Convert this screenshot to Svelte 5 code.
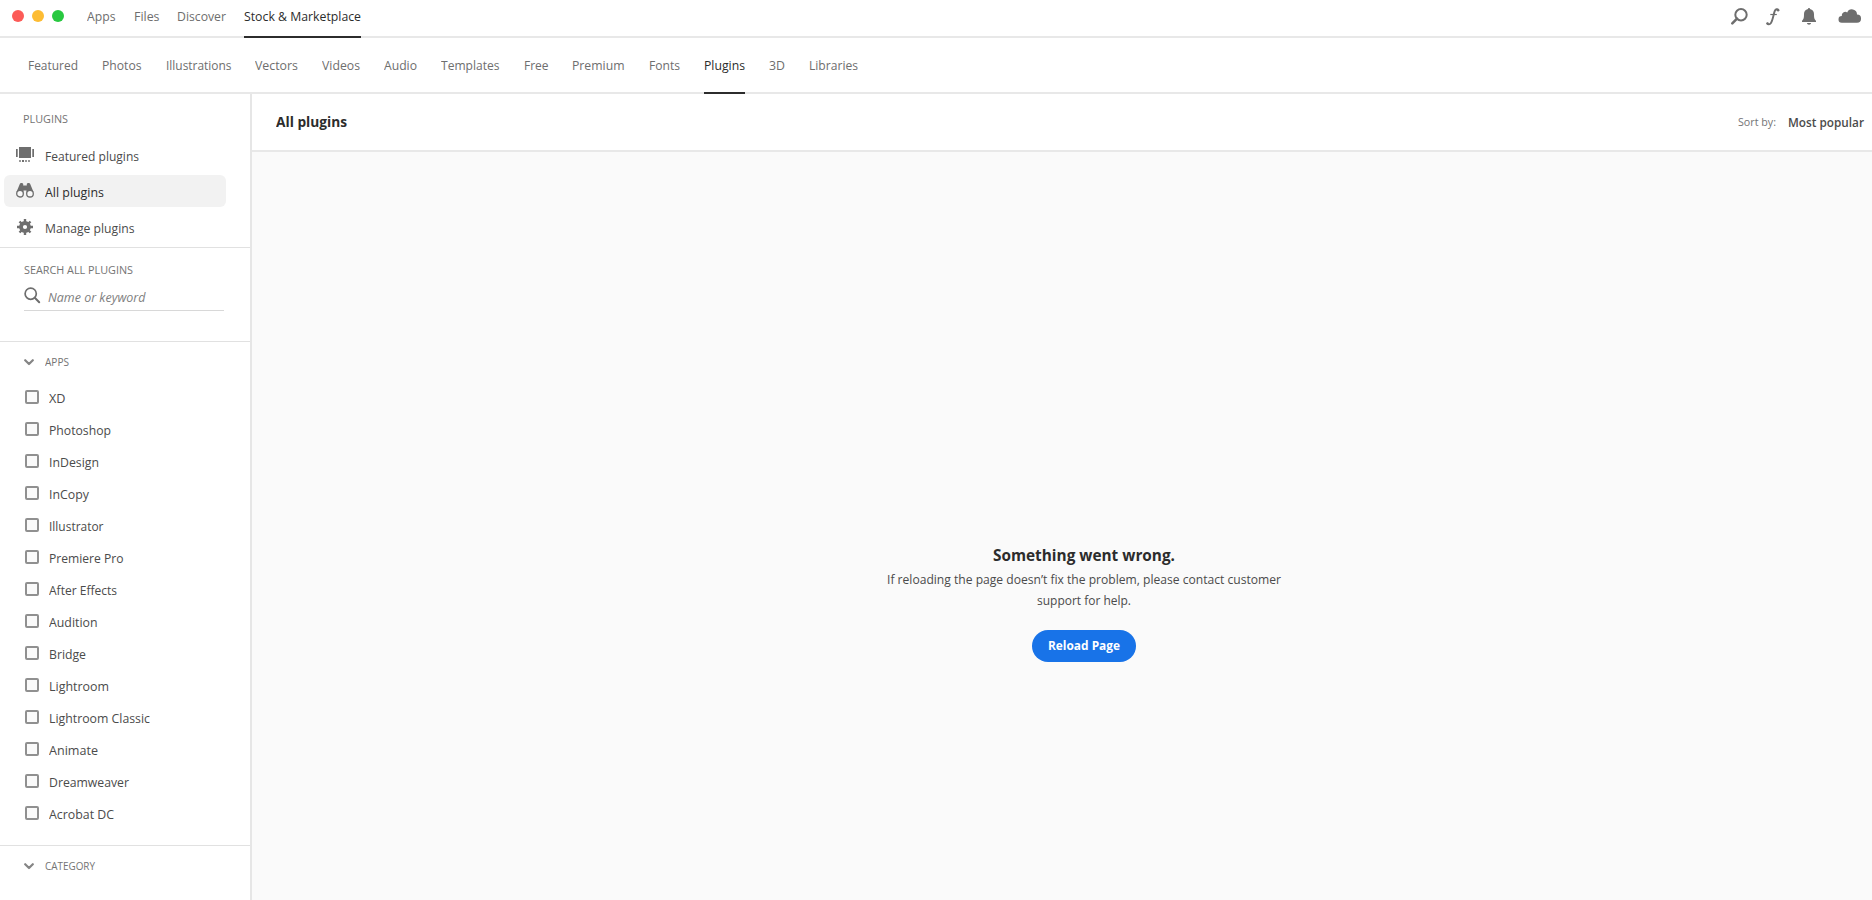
<script>
  const topNav = [
    { label: 'Apps', width: 28.5 },
    { label: 'Files', width: 25.5 },
    { label: 'Discover', width: 49 },
    { label: 'Stock & Marketplace', width: 117, active: true },
  ];

  const subNav = [
    { label: 'Featured', width: 50 },
    { label: 'Photos', width: 39.5 },
    { label: 'Illustrations', width: 65.5 },
    { label: 'Vectors', width: 43 },
    { label: 'Videos', width: 38 },
    { label: 'Audio', width: 33 },
    { label: 'Templates', width: 58.5 },
    { label: 'Free', width: 24.5 },
    { label: 'Premium', width: 52.5 },
    { label: 'Fonts', width: 31 },
    { label: 'Plugins', width: 41, active: true },
    { label: '3D', width: 16 },
    { label: 'Libraries', width: 49 },
  ];

  const apps = [
    { label: 'XD', width: 16.5 },
    { label: 'Photoshop', width: 62 },
    { label: 'InDesign', width: 50 },
    { label: 'InCopy', width: 40 },
    { label: 'Illustrator', width: 54.5 },
    { label: 'Premiere Pro', width: 74.5 },
    { label: 'After Effects', width: 68 },
    { label: 'Audition', width: 48.5 },
    { label: 'Bridge', width: 37 },
    { label: 'Lightroom', width: 60 },
    { label: 'Lightroom Classic', width: 101 },
    { label: 'Animate', width: 49 },
    { label: 'Dreamweaver', width: 80 },
    { label: 'Acrobat DC', width: 65 },
  ];

  // Condenses a label horizontally so that it fills the width of its column.
  function condense(node, width) {
    const natural = node.getBoundingClientRect().width;
    if (natural) node.style.transform = `scaleX(${width / natural})`;
  }
</script>

{#snippet text(label, width)}
  <span class="fit" style:width="{width}px"><span class="glyphs" use:condense={width}>{label}</span></span>
{/snippet}

{#snippet chevron()}
  <svg class="chevron" width="10" height="7" viewBox="0 0 10 7"><path d="M1.2 1.2 5 5l3.800-3.800" fill="none" stroke="#858585" stroke-width="2.200" stroke-linecap="round" stroke-linejoin="round" /></svg>
{/snippet}

<div class="window">
  <header class="topbar">
    <div class="lights"><i class="red"></i><i class="yellow"></i><i class="green"></i></div>
    <nav class="top-nav">
      {#each topNav as item}
        <a class:active={item.active}>{@render text(item.label, item.width)}</a>
      {/each}
    </nav>
    <div class="tools">
      <svg width="18" height="18" viewBox="0 0 18 18"><circle cx="11" cy="6.700" r="5.700" fill="none" stroke="#6e6e6e" stroke-width="2" /><path d="M7 10.700 2.300 15.400" stroke="#6e6e6e" stroke-width="2.600" stroke-linecap="round" /></svg>
      <svg width="14" height="18" viewBox="0 0 14 18"><path d="M12.300 2C11.600.700 9.600 1 8.700 3.200 7.600 5.800 6.900 12.400 4.800 15.200 3.700 16.700 2 16.800 1.300 15.600" fill="none" stroke="#6e6e6e" stroke-width="1.900" stroke-linecap="round" /><path d="M4.300 6.500H10.800" stroke="#6e6e6e" stroke-width="1.200" /><circle cx="12.100" cy="2.300" r="1.200" fill="#6e6e6e" /><circle cx="1.600" cy="15.400" r="1.200" fill="#6e6e6e" /></svg>
      <svg width="16" height="18" viewBox="0 0 16 18"><path d="M7 1C7-.200 9-.200 9 1c2.700.600 4 2.500 4 5 0 4 .300 5.200 2 6.800V14H1v-1.200C2.700 11.200 3 10 3 6c0-2.500 1.300-4.400 4-5ZM6 15h4c0 2.200-4 2.200-4 0Z" fill="#6e6e6e" /></svg>
      <svg width="24" height="16" viewBox="0 0 24 16"><path d="M3.800 14.700a3.300 3.300 0 0 1 0-6.600A3.600 3.600 0 0 1 9.200 4.400A5.100 5.100 0 0 1 19 6.500A4.100 4.100 0 0 1 18.900 14.700Z" fill="#6e6e6e" /></svg>
    </div>
  </header>

  <nav class="subbar">
    {#each subNav as item}
      <a class:active={item.active}>{@render text(item.label, item.width)}</a>
    {/each}
  </nav>

  <div class="body">
    <aside>
      <section class="plugins">
        <h2>{@render text('PLUGINS', 45)}</h2>
        <ul>
          <li>
            <svg width="18" height="18" viewBox="0 0 18 18"><path d="M3 1h12v11H3ZM0 3h1.700v8H0ZM16.300 3H18v8h-1.700Z" fill="#6e6e6e" /><path d="M3 14h2v2H3ZM9 14h2v2H9ZM12 14h2v2h-2Z" fill="#9a9a9a" /><path d="M6 14h2v2H6Z" fill="#6e6e6e" /></svg>
            {@render text('Featured plugins', 94)}
          </li>
          <li class="selected">
            <svg width="18" height="18" viewBox="0 0 18 18"><path d="M3.800 2C4.300.700 6.700.700 7.200 2V3.500h3.600V2c.5-1.300 2.900-1.300 3.400 0L17.500 10 10.500 12V8.500h-3V12L.500 10Z" fill="#6e6e6e" /><circle cx="4" cy="11.700" r="3.300" fill="#f7f7f7" stroke="#6e6e6e" stroke-width="1.300" /><circle cx="14" cy="11.700" r="3.300" fill="#f7f7f7" stroke="#6e6e6e" stroke-width="1.300" /></svg>
            {@render text('All plugins', 59)}
          </li>
          <li>
            <svg width="18" height="18" viewBox="0 0 18 18"><g transform="translate(9 9)" fill="none" stroke="#6e6e6e"><circle r="4" stroke-width="3.800" /><path d="M0-8v3M0 8V5M-8 0h3M8 0H5M-5.500-5.500l2 2M5.500 5.500l-2-2M-5.500 5.500l2-2M5.500-5.500l-2 2" stroke-width="2.400" /></g></svg>
            {@render text('Manage plugins', 89.5)}
          </li>
        </ul>
      </section>

      <section class="search">
        <h2>{@render text('SEARCH ALL PLUGINS', 109)}</h2>
        <div class="field">
          <svg width="17" height="17" viewBox="0 0 17 17"><circle cx="6.700" cy="6.700" r="5.600" fill="none" stroke="#6e6e6e" stroke-width="1.700" /><path d="m10.800 10.800 4.400 4.400" stroke="#6e6e6e" stroke-width="2" stroke-linecap="round" /></svg>
          <em>{@render text('Name or keyword', 97.5)}</em>
        </div>
      </section>

      <section class="apps">
        <h3>{@render chevron()}{@render text('APPS', 24)}</h3>
        <ul>
          {#each apps as app}
            <li><i class="box"></i>{@render text(app.label, app.width)}</li>
          {/each}
        </ul>
      </section>

      <section class="category">
        <h3>{@render chevron()}{@render text('CATEGORY', 50)}</h3>
      </section>
    </aside>

    <main>
      <header class="heading">
        <h1>{@render text('All plugins', 71)}</h1>
        <div class="sort">
          <span class="by">{@render text('Sort by:', 38)}</span>
          <span class="value">{@render text('Most popular', 76)}</span>
        </div>
      </header>
      <div class="error">
        <strong>{@render text('Something went wrong.', 182)}</strong>
        <p>{@render text('If reloading the page doesn’t fix the problem, please contact customer', 394)}</p>
        <p>{@render text('support for help.', 94)}</p>
        <button>{@render text('Reload Page', 72)}</button>
      </div>
    </main>
  </div>
</div>

<style>
  :global(body) { margin: 0; background: #fff; }
  .window {
    height: 900px;
    display: flex;
    flex-direction: column;
    overflow: hidden;
    box-sizing: border-box;
    font: 13px/20px "Open Sans", "Noto Sans", sans-serif;
    font-stretch: 88%;
    color: #4b4b4b;
  }
  .window * { box-sizing: border-box; }
  h1, h2, h3, p, ul { margin: 0; padding: 0; list-style: none; }
  svg { flex: none; display: block; }
  .fit { display: inline-block; flex: none; white-space: nowrap; text-align: left; vertical-align: top; }
  .glyphs { display: inline-block; transform-origin: 0 50%; vertical-align: top; }

  .topbar { height: 38px; flex: none; display: flex; border-bottom: 2px solid #e8e8e8; }
  .lights { display: flex; gap: 8px; padding: 10px 0 0 12px; }
  .lights i { width: 12px; height: 12px; border-radius: 50%; }
  .red { background: #fc5b57; }
  .yellow { background: #fdbc33; }
  .green { background: #28c840; }
  .top-nav { display: flex; gap: 18px; margin-left: 23px; }
  .top-nav a { height: 38px; padding-top: 6px; color: #6e6e6e; }
  .top-nav a.active, .subbar a.active { color: #2c2c2c; border-bottom: 2px solid #2c2c2c; }
  .tools { margin-left: auto; display: flex; align-items: flex-start; padding: 8px 10px 0 0; }
  .tools svg:nth-child(2) { margin-left: 18px; }
  .tools svg:nth-child(3) { margin-left: 21px; }
  .tools svg:nth-child(4) { margin-left: 21px; }

  .subbar { height: 56px; flex: none; display: flex; gap: 24px; padding-left: 28px; border-bottom: 2px solid #e8e8e8; }
  .subbar a { height: 56px; padding-top: 17px; color: #6e6e6e; }

  .body { flex: 1; min-height: 0; display: flex; }
  aside { width: 252px; flex: none; border-right: 2px solid #e6e6e6; display: flex; flex-direction: column; }
  section + section { border-top: 1px solid #e1e1e1; }
  h2, h3 { font-size: 11.500px; font-weight: 400; color: #747474; }
  .plugins { height: 153px; }
  .plugins h2 { height: 45px; padding: 15px 0 0 23px; }
  .plugins ul { display: flex; flex-direction: column; gap: 4px; padding-left: 4px; }
  .plugins li { width: 222px; height: 32px; border-radius: 6px; display: flex; gap: 10.500px; padding: 7px 0 0 12px; }
  .plugins .selected { background: #f2f2f2; color: #2c2c2c; }
  .search { height: 94px; padding: 12px 0 0 24px; }
  .field { width: 200px; height: 31px; display: flex; gap: 6.500px; border-bottom: 1px solid #d8d8d8; padding-top: 7px; }
  .field em { color: #808080; }
  .apps { height: 504px; }
  h3 { display: flex; align-items: flex-start; gap: 11px; padding: 10px 0 0 24px; height: 40px; }
  .chevron { margin-top: 7px; }
  .apps li { height: 32px; display: flex; gap: 10px; padding: 6px 0 0 25px; }
  .box { width: 14px; height: 14px; flex: none; margin-top: 2px; border: 2px solid #909090; border-radius: 2px; background: #fafafa; }

  main { flex: 1; display: flex; flex-direction: column; background: #fafafa; }
  .heading { height: 58px; flex: none; display: flex; justify-content: space-between; background: #fff; border-bottom: 2px solid #e8e8e8; padding: 17px 8.500px 0 24px; }
  h1 { font-size: 15px; line-height: 20px; font-weight: 700; color: #2c2c2c; }
  .sort { display: flex; gap: 12px; padding-top: 1px; }
  .by { font-size: 11.500px; color: #747474; }
  .value { font-weight: 550; }
  .error { display: flex; flex-direction: column; align-items: center; padding: 391px 0 0 44px; line-height: 21px; }
  .error strong { font-size: 16.500px; line-height: 24px; height: 26px; font-weight: 700; color: #2c2c2c; }
  .error p { height: 21px; }
  .error button { margin-top: 19px; width: 104px; height: 32px; border: 0; border-radius: 16px; background: #1873e8; color: #fff; font: inherit; font-weight: 700; padding: 0 0 2px; }
</style>
